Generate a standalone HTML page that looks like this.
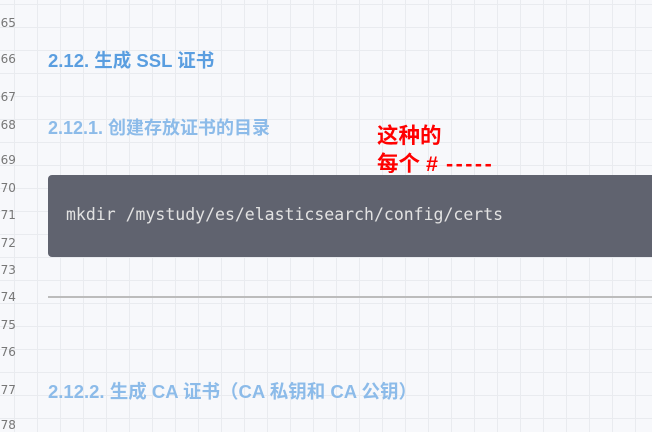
<!DOCTYPE html>
<html><head><meta charset="utf-8"><style>
body{margin:0;width:652px;height:432px;overflow:hidden;position:relative;background-color:#f7f8fb;
background-image:linear-gradient(#e9ebef 1px,transparent 1px),linear-gradient(90deg,#e9ebef 1px,transparent 1px);
background-size:23px 23px;background-position:14px 4px;font-family:"Liberation Sans","Noto Sans CJK SC",sans-serif}
.ln{position:absolute;left:-7px;color:#777;font-family:"DejaVu Sans","Liberation Sans",sans-serif;font-size:12px}
.h{position:absolute;left:48px;font-weight:bold;white-space:nowrap}
.code{position:absolute;left:48px;top:175px;width:620px;height:82px;background:#60636f;border-radius:4px}
.code span{position:absolute;left:18px;top:30px;font-family:"DejaVu Sans Mono","Liberation Mono",monospace;font-size:16.5px;color:#e2e2e2}
.hr{position:absolute;left:48px;top:296px;width:604px;height:2px;background:#bcbcbc}
.red{position:absolute;left:377px;color:#f00;font-weight:bold;font-size:21.5px;white-space:nowrap}
</style></head><body>
<div class="ln" style="top:16px">565</div>
<div class="ln" style="top:52px">566</div>
<div class="ln" style="top:90px">567</div>
<div class="ln" style="top:118px">568</div>
<div class="ln" style="top:153px">569</div>
<div class="ln" style="top:181px">570</div>
<div class="ln" style="top:208px">571</div>
<div class="ln" style="top:236px">572</div>
<div class="ln" style="top:263px">573</div>
<div class="ln" style="top:290px">574</div>
<div class="ln" style="top:318px">575</div>
<div class="ln" style="top:345px">576</div>
<div class="ln" style="top:383px">577</div>
<div class="ln" style="top:418px">578</div>
<div class="h" style="top:47px;font-size:18.5px;color:#5a9ee0">2.12. 生成 SSL 证书</div>
<div class="h" style="top:114px;font-size:18px;color:#8cbbe9">2.12.1. 创建存放证书的目录</div>
<div class="red" style="top:119px">这种的</div>
<div class="red" style="top:147px">每个 <span style="letter-spacing:2px">#</span> <span style="letter-spacing:2.5px">-----</span></div>
<div class="code"><span>mkdir /mystudy/es/elasticsearch/config/certs</span></div>
<div class="hr"></div>
<div class="h" style="top:378px;font-size:18.5px;color:#8cbbe9">2.12.2. 生成 CA 证书（CA 私钥和 CA 公钥）</div>
</body></html>
